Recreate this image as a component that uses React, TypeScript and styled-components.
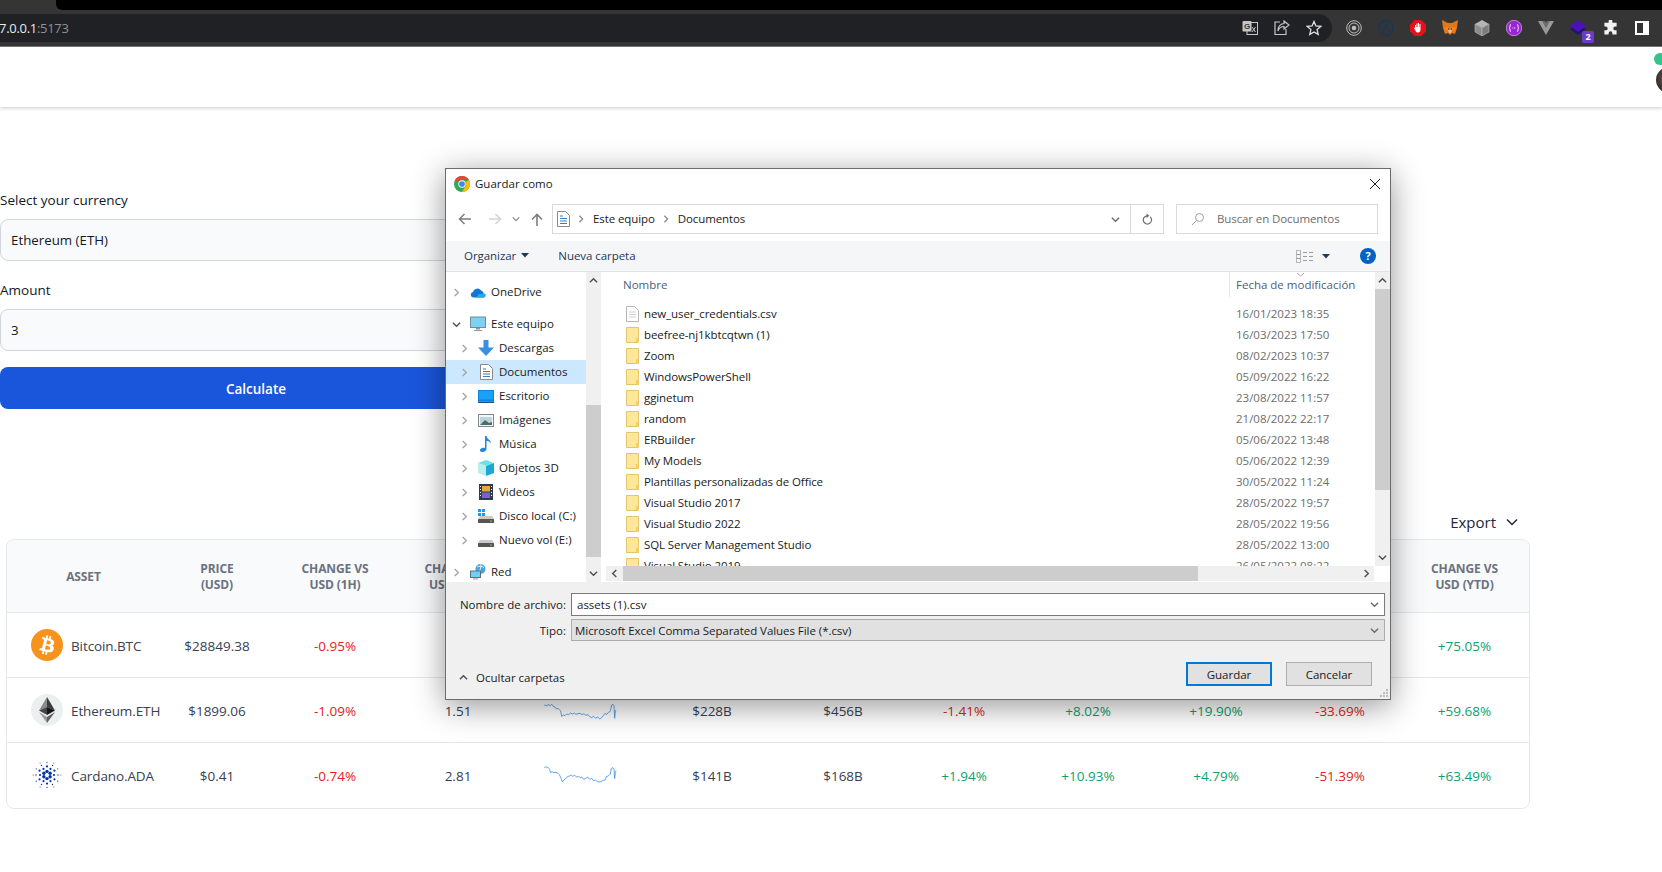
import React from "react";
import styled, { createGlobalStyle } from "styled-components";

const Global = createGlobalStyle`
  html, body { margin: 0; padding: 0; background: #fff; overflow: hidden; }
  * { box-sizing: border-box; }
  svg { flex: none; }
  #root { width: 1662px; height: 872px; overflow: hidden; }
`;

const PAGE_FONT = `"Open Sans", "Liberation Sans", sans-serif`;
const COLS = "153px 114px 122px 124px 122px 140px 122px 120px 128px 128px 120px 129px";

const Page = styled.div`
  position: relative;
  width: 1662px;
  height: 872px;
  overflow: hidden;
  font-family: ${PAGE_FONT};
  background: #fff;
`;

/* ---------- browser chrome ---------- */
const TabStrip = styled.div`
  height: 10px;
  background: #353535;
`;
const TabGap = styled.div`
  height: 10px;
  margin-left: 56px;
  background: #000;
  border-bottom-left-radius: 6px;
`;
const BrowserBar = styled.div`
  height: 37px;
  background: #353535;
  border-bottom: 1px solid #7c7c7c;
  display: flex;
  align-items: center;
  padding-bottom: 1px;
`;
const Omnibox = styled.div`
  width: 1332px;
  height: 28px;
  background: #202124;
  border-radius: 0 14px 14px 0;
  display: flex;
  align-items: center;
  flex: none;
`;
const UrlHost = styled.span`
  color: #e8eaed;
  font-size: 13px;
  letter-spacing: -0.3px;
  margin-left: -1px;
`;
const UrlPort = styled.span`
  color: #8f9296;
  font-size: 13px;
  letter-spacing: -0.3px;
`;
const OmniIcons = styled.div`
  margin-left: auto;
  display: flex;
  gap: 16px;
  padding-right: 10px;
`;
const ExtIcons = styled.div`
  display: flex;
  align-items: center;
  margin-left: 6px;
`;
const ExtSlot = styled.div`
  position: relative;
  width: 32px;
  display: flex;
  justify-content: center;
  align-items: center;
`;
const ExtBadge = styled.span`
  position: absolute;
  right: 0px;
  bottom: -7px;
  width: 12px;
  height: 12px;
  background: #6a3cc8;
  border-radius: 2px;
  color: #fff;
  font-size: 9px;
  line-height: 12px;
  text-align: center;
  font-weight: 700;
`;

/* ---------- app header ---------- */
const AppHeader = styled.header`
  height: 60px;
  background: #fff;
  box-shadow: 0 1px 4px rgba(0, 0, 0, 0.22);
  display: flex;
  justify-content: flex-end;
  position: relative;
`;
const AvatarWrap = styled.div`
  position: relative;
  width: 32px;
  height: 28px;
  margin: 19px -26px 0 0;
  border-radius: 50%;
  background: radial-gradient(circle at 40% 45%, #6b6570 0, #4a3f3c 35%, #241f1f 70%);
`;
const OnlineDot = styled.span`
  position: absolute;
  left: -2px;
  top: -13px;
  width: 12px;
  height: 12px;
  border-radius: 50%;
  background: #31c48d;
`;

/* ---------- form ---------- */
const Form = styled.div`
  width: 512px;
  padding-top: 83px;
  display: flex;
  flex-direction: column;
`;
const FieldLabel = styled.label`
  display: block;
  height: 20px;
  line-height: 20px;
  font-size: 13.5px;
  font-weight: 500;
  color: #111827;
  margin-bottom: 9px;
`;
const FieldBox = styled.div`
  height: 42px;
  background: #f9fafb;
  border: 1px solid #d1d5db;
  border-radius: 8px;
  padding: 0 10px;
  display: flex;
  align-items: center;
  font-size: 13.3px;
  color: #111827;
  margin-bottom: 19px;
`;
const CalcButton = styled.button`
  height: 42px;
  margin-top: -3px;
  padding: 2px 0 0;
  background: #1a56db;
  border: 0;
  border-radius: 8px;
  color: #fff;
  font-family: inherit;
  font-size: 13.5px;
  font-weight: 600;
`;

/* ---------- table ---------- */
const TableSection = styled.section`
  width: 1524px;
  margin-left: 6px;
`;
const ExportRow = styled.div`
  margin-top: 101px;
  height: 24px;
  margin-bottom: 5px;
  display: flex;
  justify-content: flex-end;
  align-items: center;
  gap: 9px;
  padding-right: 11px;
  font-size: 15px;
  color: #1f2937;
`;
const TableCard = styled.div`
  border: 1px solid #e5e7eb;
  border-radius: 8px;
  overflow: hidden;
  background: #fff;
`;
const HeadRow = styled.div`
  height: 73px;
  display: grid;
  grid-template-columns: ${COLS};
  background: #f9fafb;
  border-bottom: 1px solid #e5e7eb;
`;
const HeadCell = styled.div`
  display: flex;
  align-items: center;
  justify-content: center;
  text-align: center;
  padding-top: 2px;
  font-size: 12px;
  line-height: 16px;
  font-weight: 700;
  letter-spacing: -0.1px;
  color: #6b7280;
  text-transform: uppercase;
  white-space: pre-line;
`;
const BodyRow = styled.div<{ $last?: boolean }>`
  height: 65px;
  display: grid;
  grid-template-columns: ${COLS};
  align-items: center;
  border-bottom: ${(p) => (p.$last ? "0" : "1px solid #e5e7eb")};
  padding-bottom: ${(p) => (p.$last ? "1px" : "0")};
`;
const AssetCell = styled.div`
  display: flex;
  align-items: center;
  gap: 8px;
  padding-left: 24px;
  font-size: 13.5px;
  letter-spacing: -0.1px;
  color: #374151;
  white-space: nowrap;
`;
const AssetName = styled.span`
  padding-top: 2px;
`;
const Cell = styled.div<{ $tone?: "up" | "down" }>`
  text-align: center;
  padding-top: 2px;
  font-size: 13.5px;
  color: ${(p) => (p.$tone === "up" ? "#0e9f6e" : p.$tone === "down" ? "#e02424" : "#374151")};
`;
const ChartCell = styled.div`
  display: flex;
  justify-content: center;
  padding-top: 2px;
`;

/* ---------- dialog ---------- */
const Dialog = styled.div`
  position: absolute;
  left: 445px;
  top: 168px;
  width: 946px;
  height: 532px;
  background: #fff;
  border: 1px solid #6c6c6c;
  box-shadow: 0 6px 30px rgba(0, 0, 0, 0.42);
  display: flex;
  flex-direction: column;
  font-family: ${PAGE_FONT};
  font-size: 11.5px;
  color: #1a1a1a;
`;
const TitleBar = styled.div`
  height: 35px;
  flex: none;
  display: flex;
  align-items: center;
  gap: 5px;
  padding: 0 9px 6px 8px;
`;
const TitleText = styled.span`
  font-size: 11.5px;
`;
const CloseBox = styled.span`
  margin-left: auto;
  display: flex;
`;
const AddressRow = styled.div`
  height: 37px;
  flex: none;
  display: flex;
  align-items: flex-start;
`;
const NavButtons = styled.div`
  width: 106px;
  height: 30px;
  display: flex;
  align-items: center;
  padding-left: 11px;
`;
const NavBtn = styled.span<{ $w: number }>`
  width: ${(p) => p.$w}px;
  display: flex;
  justify-content: center;
  flex: none;
`;
const AddressBox = styled.div`
  width: 612px;
  height: 30px;
  border: 1px solid #d9d9d9;
  display: flex;
  align-items: center;
  padding-left: 4px;
  letter-spacing: -0.1px;
`;
const AddressText = styled.span`
  padding-bottom: 2px;
`;
const Crumb = styled.span`
  display: flex;
  margin: 0 8px 0 7px;
`;
const AddressEnd = styled.div`
  margin-left: auto;
  display: flex;
  align-items: center;
  height: 28px;
`;
const AddressDrop = styled.span`
  width: 30px;
  display: flex;
  justify-content: center;
`;
const AddressRefresh = styled.span`
  width: 33px;
  height: 28px;
  border-left: 1px solid #d9d9d9;
  display: flex;
  align-items: center;
  justify-content: center;
`;
const SearchBox = styled.div`
  width: 202px;
  height: 30px;
  margin-left: 12px;
  border: 1px solid #d9d9d9;
  display: flex;
  align-items: center;
  padding-left: 14px;
  gap: 12px;
  color: #6d6d6d;
  letter-spacing: -0.1px;
`;
const ToolBar = styled.div`
  height: 31px;
  flex: none;
  background: #f5f6f7;
  border-bottom: 1px solid #e4e4e4;
  display: flex;
  align-items: center;
  padding: 0 14px 0 18px;
  color: #1e395b;
`;
const ToolItem = styled.span`
  display: flex;
  align-items: center;
  gap: 5px;
  margin-right: 29px;
  padding-bottom: 2px;
  letter-spacing: -0.05px;
`;
const ToolRight = styled.div`
  margin-left: auto;
  display: flex;
  align-items: center;
  gap: 9px;
`;
const HelpDot = styled.span`
  width: 16px;
  height: 16px;
  margin-left: 21px;
  border-radius: 50%;
  background: #0463c0;
  color: #fff;
  font-size: 11px;
  font-weight: 700;
  line-height: 16px;
  text-align: center;
`;
const BodyArea = styled.div`
  height: 310px;
  flex: none;
  display: grid;
  grid-template-columns: 140px 15px 5px 1fr;
  overflow: hidden;
`;
const NavPane = styled.div`
  padding-top: 8px;
  overflow: hidden;
`;
const NavRow = styled.div<{ $level: number; $sel?: boolean; $gap?: boolean }>`
  height: 24px;
  margin-top: ${(p) => (p.$gap ? "8px" : "0")};
  display: flex;
  align-items: center;
  background: ${(p) => (p.$sel ? "#cce8ff" : "transparent")};
  padding-left: ${(p) => (p.$level === 0 ? 6 : 14)}px;
  white-space: nowrap;
`;
const NavChevron = styled.span`
  width: 9px;
  display: flex;
  justify-content: center;
  margin-right: 9px;
  flex: none;
`;
const NavIcon = styled.span`
  width: 16px;
  height: 16px;
  display: flex;
  align-items: center;
  justify-content: center;
  margin-right: 5px;
  flex: none;
`;
const NavLabel = styled.span`
  padding-bottom: 2px;
`;
const VScroll = styled.div`
  background: #f0f0f0;
  display: flex;
  flex-direction: column;
  align-items: stretch;
`;
const ScrollArrow = styled.div`
  height: 17px;
  display: flex;
  align-items: center;
  justify-content: center;
  flex: none;
`;
const ScrollGap = styled.div<{ $h: number }>`
  height: ${(p) => p.$h}px;
  flex: none;
`;
const ScrollThumb = styled.div<{ $h: number }>`
  height: ${(p) => p.$h}px;
  flex: none;
  background: #cdcdcd;
`;
const FilePane = styled.div`
  display: flex;
  flex-direction: column;
  min-width: 0;
`;
const FileTop = styled.div`
  height: 294px;
  flex: none;
  display: grid;
  grid-template-columns: 1fr 15px;
  overflow: hidden;
`;
const FileList = styled.div`
  overflow: hidden;
`;
const ListHead = styled.div`
  height: 25px;
  display: grid;
  grid-template-columns: 623px 1fr;
  color: #4c607a;
  margin-bottom: 6px;
`;
const HeadName = styled.span`
  padding: 5px 0 0 17px;
`;
const HeadDate = styled.span`
  position: relative;
  padding: 5px 0 0 6px;
  border-left: 1px solid #e5e5e5;
  white-space: nowrap;
`;
const SortCaret = styled.span`
  position: absolute;
  left: 66px;
  top: 0;
  display: flex;
`;
const FileRow = styled.div`
  height: 21px;
  display: grid;
  grid-template-columns: 623px 1fr;
  align-items: center;
`;
const FileName = styled.span`
  display: flex;
  align-items: center;
  padding-left: 20px;
  gap: 5px;
  letter-spacing: -0.1px;
  white-space: nowrap;
`;
const FileDate = styled.span`
  padding-left: 7px;
  color: #6d6d6d;
  white-space: nowrap;
`;
const HScroll = styled.div`
  height: 15px;
  flex: none;
  display: grid;
  grid-template-columns: 17px 575px 1fr 16px 16px;
  background: #f0f0f0;
`;
const HThumb = styled.div`
  background: #cdcdcd;
`;
const HArrow = styled.div`
  display: flex;
  align-items: center;
  justify-content: center;
`;
const HCorner = styled.div`
  background: #fff;
`;
const BottomPanel = styled.div`
  position: relative;
  flex: 1;
  background: #f0f0f0;
  padding-top: 11px;
`;
const FormGrid = styled.div`
  display: grid;
  grid-template-columns: 120px 814px;
  column-gap: 5px;
  row-gap: 3px;
  align-items: center;
`;
const FormLabel = styled.span`
  text-align: right;
  white-space: nowrap;
`;
const NameInput = styled.div`
  height: 23px;
  background: #fff;
  border: 1px solid #7a7a7a;
  display: flex;
  align-items: center;
  justify-content: space-between;
  padding: 0 5px;
`;
const TypeInput = styled.div`
  height: 22px;
  background: #e1e1e1;
  border: 1px solid #adadad;
  display: flex;
  align-items: center;
  justify-content: space-between;
  padding: 0 5px 0 3px;
  letter-spacing: -0.05px;
`;
const Footer = styled.div`
  margin-top: 21px;
  display: flex;
  justify-content: space-between;
  align-items: flex-start;
  padding: 0 18px 0 13px;
`;
const HideFolders = styled.span`
  display: flex;
  align-items: center;
  gap: 8px;
  padding-top: 8px;
`;
const Actions = styled.div`
  display: flex;
  gap: 14px;
`;
const DialogButton = styled.button<{ $primary?: boolean }>`
  width: 86px;
  height: 24px;
  padding: 0;
  background: #e1e1e1;
  border: ${(p) => (p.$primary ? "2px solid #0078d7" : "1px solid #adadad")};
  font-family: inherit;
  font-size: 11.5px;
  color: #1a1a1a;
`;
const Grip = styled.span`
  position: absolute;
  right: 1px;
  bottom: 1px;
  display: flex;
`;

/* ---------- icons ---------- */
const Chev = ({ d = "right", c = "#a6a6a6", s = 9 }: { d?: "right" | "down" | "up" | "left"; c?: string; s?: number }) => {
  const pts = { right: "3,1 7,5 3,9", left: "7,1 3,5 7,9", down: "1,3 5,7 9,3", up: "1,7 5,3 9,7" }[d];
  return (
    <svg width={s} height={s} viewBox="0 0 10 10">
      <polyline points={pts} fill="none" stroke={c} strokeWidth="1.6" />
    </svg>
  );
};
const Caret = ({ c = "#1e395b" }: { c?: string }) => (
  <svg width="8" height="5" viewBox="0 0 8 5"><polygon points="0,0 8,0 4,4.5" fill={c} /></svg>
);
const ChromeIcon = () => (
  <svg width="16" height="16" viewBox="0 0 48 48">
    <circle cx="24" cy="24" r="24" fill="#34a853" />
    <path d="M24 0a24 24 0 0 1 20.8 12H24a12 12 0 0 0-10.4 6L3.2 12A24 24 0 0 1 24 0z" fill="#ea4335" />
    <path d="M44.8 12A24 24 0 0 1 24 48l10.4-18a12 12 0 0 0 0-12z" fill="#fbbc05" />
    <circle cx="24" cy="24" r="11" fill="#fff" />
    <circle cx="24" cy="24" r="8.5" fill="#4285f4" />
  </svg>
);
const Folder = () => (
  <svg width="13" height="16" viewBox="0 0 13 16">
    <path d="M.5 .5h12v15H.5z" fill="#ffe79a" stroke="#e3c56f" />
    <path d="M10 11h2.500v4.500H10z" fill="#f7cf5f" />
  </svg>
);
const FileDoc = () => (
  <svg width="13" height="16" viewBox="0 0 13 16">
    <path d="M.5 .5h8l4 4v11H.5z" fill="#fff" stroke="#b5b5b5" />
    <path d="M3 6h7M3 8.500h7M3 11h7" stroke="#cfcfcf" />
  </svg>
);
const DocsIcon = () => (
  <svg width="13" height="16" viewBox="0 0 13 16">
    <path d="M.5 .5h8l4 4v11H.5z" fill="#fff" stroke="#8a8a8a" />
    <path d="M3 5h3M3 7.500h7M3 10h7M3 12.500h7" stroke="#3a7fb8" />
  </svg>
);
const OneDrive = () => (
  <svg width="16" height="11" viewBox="0 0 16 11">
    <path d="M3 10.500A2.800 2.800 0 0 1 3 5a4.500 4.500 0 0 1 8-1.500 3.500 3.500 0 0 1 2.600 3A2 2 0 0 1 13.500 10.500z" fill="#0f78d4" />
    <path d="M6 10.500 9 7l4.500-.5a2 2 0 0 1 0 4z" fill="#28a8ea" />
  </svg>
);
const Monitor = () => (
  <svg width="16" height="16" viewBox="0 0 16 16">
    <rect x=".5" y="1" width="15" height="10.500" fill="#7fd0f5" stroke="#6f8da0" />
    <path d="M6 12h4v1.500H6zM4 14h8v1H4z" fill="#8b9aa5" />
  </svg>
);
const Download = () => (
  <svg width="16" height="16" viewBox="0 0 16 16">
    <path d="M5.500 0h5v7.500H16L8 16 0 7.500h5.500z" fill="#3a8fe0" />
  </svg>
);
const Desktop = () => (
  <svg width="16" height="13" viewBox="0 0 16 13">
    <rect width="16" height="11.500" fill="#0a84e8" />
    <rect x="1" y="1" width="14" height="8.500" fill="#1aa0f5" />
    <rect y="11.500" width="16" height="1.500" fill="#1a4f88" />
  </svg>
);
const Pictures = () => (
  <svg width="16" height="13" viewBox="0 0 16 13">
    <rect x=".5" y=".5" width="15" height="12" fill="#f4f6f7" stroke="#7d8a92" />
    <path d="M2 3h12v8H2z" fill="#bcd4dc" />
    <path d="M2 11 7 6l4 3 3-1v3z" fill="#4e6f63" />
  </svg>
);
const Music = () => (
  <svg width="14" height="16" viewBox="0 0 14 16">
    <path d="M6 0h1.500c.3 3 4.500 3.500 4.500 7.500-1-2-3-2.500-4.500-2.500v8c0 2-2 3-4 3S0 14.500 1.500 13 5 11.500 6 12z" fill="#1e88e5" />
  </svg>
);
const Cube = () => (
  <svg width="16" height="16" viewBox="0 0 16 16">
    <path d="M8 0l8 3-8 3-8-3z" fill="#6fe0e8" />
    <path d="M0 3l8 3v10l-8-3z" fill="#b8f0ee" />
    <path d="M16 3 8 6v10l8-3z" fill="#1ba8d6" />
  </svg>
);
const Film = () => (
  <svg width="14" height="16" viewBox="0 0 14 16">
    <rect width="14" height="16" fill="#2f3b45" />
    <rect x="3" y="2" width="8" height="5.500" fill="#e8a93a" />
    <rect x="3" y="8.500" width="8" height="5.500" fill="#7b62c8" />
    <path d="M1 2h1v1H1zM1 5h1v1H1zM1 8h1v1H1zM1 11h1v1H1zM12 2h1v1h-1zM12 5h1v1h-1zM12 8h1v1h-1zM12 11h1v1h-1z" fill="#fff" />
  </svg>
);
const Disk = ({ win }: { win?: boolean }) => (
  <svg width="16" height="14" viewBox="0 0 16 14">
    {win && <path d="M0 0h3v3H0zM4 0h3v3H4zM0 4h3v3H0zM4 4h3v3H4z" fill="#1e9be8" />}
    <path d="M2 7h12l2 3H0z" fill="#c9c9c9" />
    <rect y="10" width="16" height="4" rx=".5" fill="#555" />
    <rect x="12" y="11.500" width="2" height="1" fill="#6fdc5c" />
  </svg>
);
const Network = () => (
  <svg width="16" height="16" viewBox="0 0 16 16">
    <circle cx="10.500" cy="5" r="5" fill="#4aa3df" />
    <path d="M7 3c2-1 5-1 7 .5M9 9c1-3 2-5 2-9" stroke="#e5f3fb" fill="none" />
    <rect x=".5" y="7" width="10" height="6.500" fill="#6fd0f5" stroke="#61707a" />
    <path d="M3 14.500h5v1H3z" fill="#8b9aa5" />
  </svg>
);
const GlyphTranslate = () => (
  <svg width="16" height="16" viewBox="0 0 16 16">
    <rect x="5" y="2.500" width="10.500" height="12" fill="none" stroke="#c4c7c5" />
    <rect x=".5" y="1" width="9" height="10.500" rx="1" fill="#c4c7c5" />
    <text x="2" y="9" fontSize="8" fontFamily="Liberation Sans" fontWeight="700" fill="#353535">G</text>
    <path d="M10 7l3.500 5M13.500 7 10 12" stroke="#c4c7c5" />
  </svg>
);
const GlyphShare = () => (
  <svg width="16" height="16" viewBox="0 0 16 16" fill="none" stroke="#c4c7c5" strokeWidth="1.200">
    <path d="M6 2H1v12.500h11V9" />
    <path d="M10 1l5 4-5 4V6.500C7 6.500 5 8 4 11c0-4 2-7 6-7.500z" />
  </svg>
);
const GlyphStar = () => (
  <svg width="16" height="16" viewBox="0 0 16 16">
    <polygon points="8,1.500 9.900,6 14.800,6.400 11.100,9.600 12.200,14.400 8,11.900 3.800,14.400 4.900,9.600 1.200,6.400 6.100,6" fill="none" stroke="#dfe1e5" strokeWidth="1.300" />
  </svg>
);
const ExtTarget = () => (
  <svg width="16" height="16" viewBox="0 0 16 16" fill="none" stroke="#bdbdbd">
    <circle cx="8" cy="8" r="7.300" /><circle cx="8" cy="8" r="5" />
    <circle cx="8" cy="8" r="2.300" fill="#bdbdbd" stroke="none" />
  </svg>
);
const ExtA = () => (
  <svg width="16" height="16" viewBox="0 0 16 16" fill="none" stroke="#16365c" strokeWidth="1.200">
    <circle cx="8" cy="8" r="7.300" /><path d="M5 11.500 8 4l3 7.500M6 9.500h4" />
  </svg>
);
const ExtStop = () => (
  <svg width="16" height="16" viewBox="0 0 16 16">
    <polygon points="4.700,0 11.300,0 16,4.700 16,11.300 11.300,16 4.700,16 0,11.300 0,4.700" fill="#e8101a" />
    <path d="M5 8V5h1v2h.500V3.500h1V7H8V3h1v4h.500V4h1v5.500c0 2-1 3-2.500 3s-2-.500-3.500-3.500L3.500 7.500z" fill="#fff" />
  </svg>
);
const ExtFox = () => (
  <svg width="16" height="16" viewBox="0 0 16 16">
    <polygon points="0,0 6,3 10,3 16,0 15,8 13,14 10,13 8,15 6,13 3,14 1,8" fill="#e2761b" />
    <polygon points="2,8 6,7 6,10 3,10" fill="#f6851b" />
    <polygon points="14,8 10,7 10,10 13,10" fill="#f6851b" />
    <polygon points="6,10 10,10 9,13 7,13" fill="#d7c1b3" />
    <polygon points="6,8 7,9 6,10" fill="#233447" />
    <polygon points="10,8 9,9 10,10" fill="#233447" />
  </svg>
);
const ExtBox = () => (
  <svg width="16" height="16" viewBox="0 0 16 16">
    <polygon points="8,0 15,4 8,8 1,4" fill="#b5b5b5" />
    <polygon points="1,4 8,8 8,16 1,12" fill="#8c8c8c" stroke="#bdbdbd" strokeWidth=".6" />
    <polygon points="15,4 8,8 8,16 15,12" fill="#7d7d7d" stroke="#bdbdbd" strokeWidth=".6" />
  </svg>
);
const ExtPurple = () => (
  <svg width="16" height="16" viewBox="0 0 16 16">
    <circle cx="8" cy="8" r="7.700" fill="#9b24d6" stroke="#e6c8f5" strokeWidth=".6" />
    <path d="M5 4.500c-1 0-1 1-1 2s-.8 1.500-.8 1.500.8.500.8 1.500 0 2 1 2M11 4.500c1 0 1 1 1 2s.8 1.500.8 1.500-.8.500-.8 1.500 0 2-1 2M6.500 8h.8M8 8h.8M9.500 8h.300" stroke="#fff" fill="none" />
  </svg>
);
const ExtV = () => (
  <svg width="16" height="14" viewBox="0 0 16 14">
    <polygon points="0,0 4.500,0 8,6.500 11.500,0 16,0 8,14" fill="#9a9a9a" />
    <polygon points="4.500,0 7,0 8,2 9,0 11.500,0 8,6.500" fill="#6f6f6f" />
  </svg>
);
const ExtStack = () => (
  <svg width="16" height="16" viewBox="0 0 16 16">
    <polygon points="0,9 8,5 16,9 8,15" fill="#241270" />
    <polygon points="0,6 8,0 16,6 8,12" fill="#4a12b8" />
  </svg>
);
const ExtPuzzle = () => (
  <svg width="15" height="15" viewBox="0 0 16 16">
    <path d="M6 1.500a2 2 0 0 1 4 0V3h4.500v4H13a2 2 0 0 0 0 4h1.500v4.500H10V14a2 2 0 0 0-4 0v1.500H1.500V11H3a2 2 0 0 0 0-4H1.500V3H6z" fill="#f1f1f1" />
  </svg>
);
const ExtPanel = () => (
  <svg width="14" height="14" viewBox="0 0 14 14">
    <rect x="1" y="1" width="12" height="12" fill="none" stroke="#fff" strokeWidth="2" />
    <rect x="8" y="1" width="5" height="12" fill="#fff" />
  </svg>
);
const BtcIcon = () => (
  <svg width="32" height="32" viewBox="0 0 32 32">
    <circle cx="16" cy="16" r="16" fill="#f7931a" />
    <path fill="#fff" d="M23.189 14.020c.314-2.096-1.283-3.223-3.465-3.975l.708-2.840-1.728-.430-.690 2.765c-.454-.114-.920-.220-1.385-.326l.695-2.783L15.596 6l-.708 2.839c-.376-.086-.746-.170-1.104-.260l.002-.009-2.384-.595-.460 1.846s1.283.294 1.256.312c.700.175.826.638.805 1.006l-.806 3.235c.048.012.110.030.180.057l-.183-.045-1.130 4.532c-.086.212-.303.531-.793.410.018.025-1.256-.313-1.256-.313l-.858 1.978 2.250.561c.418.105.828.215 1.231.318l-.715 2.872 1.727.430.708-2.840c.472.127.930.245 1.378.357l-.706 2.828 1.728.430.715-2.866c2.948.558 5.164.333 6.097-2.333.752-2.146-.037-3.385-1.588-4.192 1.130-.260 1.980-1.003 2.207-2.538zm-3.950 5.538c-.533 2.147-4.148.986-5.320.695l.950-3.805c1.172.293 4.929.872 4.370 3.110zm.535-5.569c-.487 1.953-3.495.960-4.470.717l.860-3.450c.975.243 4.118.696 3.610 2.733z" />
  </svg>
);
const EthIcon = () => (
  <svg width="32" height="32" viewBox="0 0 32 32">
    <circle cx="16" cy="16" r="16" fill="#ecefF0" />
    <polygon points="16,3 8,16.500 16,13" fill="#8a8a8a" />
    <polygon points="16,3 24,16.500 16,13" fill="#3c3c3d" />
    <polygon points="8,16.500 16,21 16,13" fill="#454545" />
    <polygon points="24,16.500 16,21 16,13" fill="#141414" />
    <polygon points="8,18 16,29 16,23" fill="#9a9a9a" />
    <polygon points="24,18 16,29 16,23" fill="#5f5f60" />
  </svg>
);
const AdaIcon = () => {
  const dots: { x: number; y: number; r: number }[] = [];
  const ring = (radius: number, n: number, r: number, offset = 0) => {
    for (let i = 0; i < n; i++) {
      const a = ((i * 360) / n + offset) * (Math.PI / 180);
      dots.push({ x: 16 + radius * Math.cos(a), y: 16 + radius * Math.sin(a), r });
    }
  };
  ring(3.6, 6, 1.7, 30);
  ring(7, 6, 1.1, 0);
  ring(8.6, 6, 1.1, 30);
  ring(11, 6, 0.7, 0);
  ring(12.4, 6, 0.6, 30);
  ring(13.8, 6, 0.5, 0);
  return (
    <svg width="32" height="32" viewBox="0 0 32 32">
      {dots.map((d, i) => (
        <circle key={i} cx={d.x} cy={d.y} r={d.r} fill="#0033ad" />
      ))}
    </svg>
  );
};
const Spark = ({ pts }: { pts: string }) => (
  <svg width="74" height="20" viewBox="313 0 220 60">
    <polyline points={pts} fill="none" stroke="#3f8fe0" strokeWidth="2.400" strokeLinejoin="round" />
  </svg>
);

const SPARK_A =
  "313,12 320,14 325,11 331,14 335,10 340,16 345,18 350,24 354,22 358,26 362,30 365,46 370,42 375,44 380,39 386,41 392,36 397,39 403,36 408,40 414,38 420,37 426,41 432,38 438,43 444,41 449,47 455,50 461,46 467,52 473,48 479,54 485,50 490,44 495,37 500,40 505,34 510,32 513,22 515,12 519,10 522,14 524,52 526,30 528,27";
const SPARK_B =
  "313,4 320,3 325,5 329,10 331,20 336,17 342,20 348,19 354,22 358,26 362,34 367,48 372,42 377,38 382,32 388,30 393,27 398,31 404,28 410,33 416,31 421,35 426,33 431,40 437,37 443,33 449,40 455,37 460,44 466,42 472,47 480,48 487,44 495,42 499,32 505,30 511,24 514,7 519,5 522,9 524,38 526,20 528,14";

type Tone = "up" | "down";
const tone = (v: string): Tone => (v.startsWith("+") ? "up" : "down");

const HEADERS = [
  "Asset", "Price\n(USD)", "Change vs\nUSD (1H)", "Change vs\nUSD (24H)", "7D Chart",
  "Market\nCap", "Volume\n(24H)", "Change vs\nUSD (7D)", "Change vs\nUSD (30D)",
  "Change vs\nUSD (90D)", "Change vs\nUSD (1Y)", "Change vs\nUSD (YTD)",
];
const ROWS = [
  { icon: <BtcIcon />, name: "Bitcoin.BTC", price: "$28849.38", h1: "-0.95%", mid: "1.20", spark: SPARK_A, cap: "$557B", vol: "$590B", changes: ["-1.10%", "+6.12%", "+21.40%", "-28.70%", "+75.05%"] },
  { icon: <EthIcon />, name: "Ethereum.ETH", price: "$1899.06", h1: "-1.09%", mid: "1.51", spark: SPARK_A, cap: "$228B", vol: "$456B", changes: ["-1.41%", "+8.02%", "+19.90%", "-33.69%", "+59.68%"] },
  { icon: <AdaIcon />, name: "Cardano.ADA", price: "$0.41", h1: "-0.74%", mid: "2.81", spark: SPARK_B, cap: "$141B", vol: "$168B", changes: ["+1.94%", "+10.93%", "+4.79%", "-51.39%", "+63.49%"] },
];
const NAV = [
  { level: 0, label: "OneDrive", icon: <OneDrive /> },
  { level: 0, label: "Este equipo", icon: <Monitor />, open: true, gap: true },
  { level: 1, label: "Descargas", icon: <Download /> },
  { level: 1, label: "Documentos", icon: <DocsIcon />, sel: true },
  { level: 1, label: "Escritorio", icon: <Desktop /> },
  { level: 1, label: "Imágenes", icon: <Pictures /> },
  { level: 1, label: "Música", icon: <Music /> },
  { level: 1, label: "Objetos 3D", icon: <Cube /> },
  { level: 1, label: "Videos", icon: <Film /> },
  { level: 1, label: "Disco local (C:)", icon: <Disk win /> },
  { level: 1, label: "Nuevo vol (E:)", icon: <Disk /> },
  { level: 0, label: "Red", icon: <Network />, gap: true },
];
const FILES: [string, string][] = [
  ["new_user_credentials.csv", "16/01/2023 18:35"],
  ["beefree-nj1kbtcqtwn (1)", "16/03/2023 17:50"],
  ["Zoom", "08/02/2023 10:37"],
  ["WindowsPowerShell", "05/09/2022 16:22"],
  ["gginetum", "23/08/2022 11:57"],
  ["random", "21/08/2022 22:17"],
  ["ERBuilder", "05/06/2022 13:48"],
  ["My Models", "05/06/2022 12:39"],
  ["Plantillas personalizadas de Office", "30/05/2022 11:24"],
  ["Visual Studio 2017", "28/05/2022 19:57"],
  ["Visual Studio 2022", "28/05/2022 19:56"],
  ["SQL Server Management Studio", "28/05/2022 13:00"],
  ["Visual Studio 2019", "26/05/2022 08:22"],
];

export default function App() {
  return (
    <Page>
      <Global />
      <TabStrip><TabGap /></TabStrip>
      <BrowserBar>
        <Omnibox>
          <UrlHost>7.0.0.1</UrlHost>
          <UrlPort>:5173</UrlPort>
          <OmniIcons>
            <GlyphTranslate />
            <GlyphShare />
            <GlyphStar />
          </OmniIcons>
        </Omnibox>
        <ExtIcons>
          <ExtSlot><ExtTarget /></ExtSlot>
          <ExtSlot><ExtA /></ExtSlot>
          <ExtSlot><ExtStop /></ExtSlot>
          <ExtSlot><ExtFox /></ExtSlot>
          <ExtSlot><ExtBox /></ExtSlot>
          <ExtSlot><ExtPurple /></ExtSlot>
          <ExtSlot><ExtV /></ExtSlot>
          <ExtSlot><ExtStack /><ExtBadge>2</ExtBadge></ExtSlot>
          <ExtSlot><ExtPuzzle /></ExtSlot>
          <ExtSlot><ExtPanel /></ExtSlot>
        </ExtIcons>
      </BrowserBar>

      <AppHeader>
        <AvatarWrap><OnlineDot /></AvatarWrap>
      </AppHeader>

      <Form>
        <FieldLabel>Select your currency</FieldLabel>
        <FieldBox>Ethereum (ETH)</FieldBox>
        <FieldLabel>Amount</FieldLabel>
        <FieldBox>3</FieldBox>
        <CalcButton>Calculate</CalcButton>
      </Form>

      <TableSection>
        <ExportRow>
          Export
          <svg width="14" height="14" viewBox="0 0 14 14"><polyline points="2,4.500 7,9.500 12,4.500" fill="none" stroke="#1f2937" strokeWidth="1.500" /></svg>
        </ExportRow>
        <TableCard>
          <HeadRow>
            {HEADERS.map((h) => <HeadCell key={h}>{h}</HeadCell>)}
          </HeadRow>
          {ROWS.map((r, i) => (
            <BodyRow key={r.name} $last={i === ROWS.length - 1}>
              <AssetCell>{r.icon}<AssetName>{r.name}</AssetName></AssetCell>
              <Cell>{r.price}</Cell>
              <Cell $tone={tone(r.h1)}>{r.h1}</Cell>
              <Cell>{r.mid}</Cell>
              <ChartCell><Spark pts={r.spark} /></ChartCell>
              <Cell>{r.cap}</Cell>
              <Cell>{r.vol}</Cell>
              {r.changes.map((c, j) => <Cell key={j} $tone={tone(c)}>{c}</Cell>)}
            </BodyRow>
          ))}
        </TableCard>
      </TableSection>

      <Dialog>
        <TitleBar>
          <ChromeIcon />
          <TitleText>Guardar como</TitleText>
          <CloseBox>
            <svg width="12" height="12" viewBox="0 0 12 12"><path d="M1 1l10 10M11 1 1 11" stroke="#222" strokeWidth="1" /></svg>
          </CloseBox>
        </TitleBar>

        <AddressRow>
          <NavButtons>
            <NavBtn $w={16}>
              <svg width="14" height="12" viewBox="0 0 14 12"><path d="M13 6H2M6.500 1 1.500 6l5 5" fill="none" stroke="#7d7d7d" strokeWidth="1.500" /></svg>
            </NavBtn>
            <NavBtn $w={15} />
            <NavBtn $w={14}>
              <svg width="14" height="12" viewBox="0 0 14 12"><path d="M1 6h11M7.500 1l5 5-5 5" fill="none" stroke="#d4d4d4" strokeWidth="1.500" /></svg>
            </NavBtn>
            <NavBtn $w={28}><Chev d="down" c="#8a8a8a" s={8} /></NavBtn>
            <NavBtn $w={14}>
              <svg width="12" height="13" viewBox="0 0 12 13"><path d="M6 13V2M1 6.500 6 1.500l5 5" fill="none" stroke="#7d7d7d" strokeWidth="1.600" /></svg>
            </NavBtn>
          </NavButtons>
          <AddressBox>
            <DocsIcon />
            <Crumb><Chev c="#8a8a8a" s={8} /></Crumb>
            <AddressText>Este equipo</AddressText>
            <Crumb><Chev c="#8a8a8a" s={8} /></Crumb>
            <AddressText>Documentos</AddressText>
            <AddressEnd>
              <AddressDrop><Chev d="down" c="#6d6d6d" /></AddressDrop>
              <AddressRefresh>
                <svg width="11" height="12" viewBox="0 0 12 13"><path d="M9 4.200A4.500 4.500 0 1 1 5.500 3" fill="none" stroke="#6d6d6d" strokeWidth="1.300" /><polygon points="5,0.500 5,5.500 8,3" fill="#6d6d6d" /></svg>
              </AddressRefresh>
            </AddressEnd>
          </AddressBox>
          <SearchBox>
            <svg width="14" height="14" viewBox="0 0 14 14"><circle cx="8.500" cy="5.500" r="4" fill="none" stroke="#a0a0a0" /><path d="M5.500 8.500 1 13" stroke="#a0a0a0" /></svg>
            <AddressText>Buscar en Documentos</AddressText>
          </SearchBox>
        </AddressRow>

        <ToolBar>
          <ToolItem>Organizar <Caret /></ToolItem>
          <ToolItem>Nueva carpeta</ToolItem>
          <ToolRight>
            <svg width="17" height="13" viewBox="0 0 17 13" fill="none">
              <rect x=".5" y=".5" width="4" height="12" stroke="#b8b8b8" />
              <path d="M.5 4.500h4M.5 8.500h4M7 2.500h4M13 2.500h4M7 6.500h4M13 6.500h4M7 10.500h4M13 10.500h4" stroke="#9c9c9c" />
            </svg>
            <Caret />
            <HelpDot>?</HelpDot>
          </ToolRight>
        </ToolBar>

        <BodyArea>
          <NavPane>
            {NAV.map((n) => (
              <NavRow key={n.label} $level={n.level} $sel={n.sel} $gap={n.gap}>
                <NavChevron>
                  <Chev d={n.open ? "down" : "right"} c={n.open ? "#555" : "#a6a6a6"} />
                </NavChevron>
                <NavIcon>{n.icon}</NavIcon>
                <NavLabel>{n.label}</NavLabel>
              </NavRow>
            ))}
          </NavPane>
          <VScroll>
            <ScrollArrow><Chev d="up" c="#505050" /></ScrollArrow>
            <ScrollGap $h={116} />
            <ScrollThumb $h={152} />
            <ScrollGap $h={8} />
            <ScrollArrow><Chev d="down" c="#505050" /></ScrollArrow>
          </VScroll>
          <div />
          <FilePane>
            <FileTop>
              <FileList>
                <ListHead>
                  <HeadName>Nombre</HeadName>
                  <HeadDate>
                    <SortCaret><svg width="9" height="5" viewBox="0 0 9 5"><polyline points="1,1 4.500,4 8,1" fill="none" stroke="#a8a8a8" /></svg></SortCaret>
                    Fecha de modificación
                  </HeadDate>
                </ListHead>
                {FILES.map(([name, date], i) => (
                  <FileRow key={name}>
                    <FileName>{i === 0 ? <FileDoc /> : <Folder />}{name}</FileName>
                    <FileDate>{date}</FileDate>
                  </FileRow>
                ))}
              </FileList>
              <VScroll>
                <ScrollArrow><Chev d="up" c="#505050" /></ScrollArrow>
                <ScrollThumb $h={201} />
                <ScrollGap $h={59} />
                <ScrollArrow><Chev d="down" c="#505050" /></ScrollArrow>
              </VScroll>
            </FileTop>
            <HScroll>
              <HArrow><Chev d="left" c="#505050" /></HArrow>
              <HThumb />
              <div />
              <HArrow><Chev d="right" c="#505050" /></HArrow>
              <HCorner />
            </HScroll>
          </FilePane>
        </BodyArea>

        <BottomPanel>
          <FormGrid>
            <FormLabel>Nombre de archivo:</FormLabel>
            <NameInput>assets (1).csv <Chev d="down" c="#6d6d6d" /></NameInput>
            <FormLabel>Tipo:</FormLabel>
            <TypeInput>Microsoft Excel Comma Separated Values File (*.csv) <Chev d="down" c="#6d6d6d" /></TypeInput>
          </FormGrid>
          <Footer>
            <HideFolders><Chev d="up" c="#505050" />Ocultar carpetas</HideFolders>
            <Actions>
              <DialogButton $primary>Guardar</DialogButton>
              <DialogButton>Cancelar</DialogButton>
            </Actions>
          </Footer>
          <Grip>
            <svg width="10" height="10" viewBox="0 0 10 10" fill="#bdbdbd">
              <path d="M7 1h2v2H7zM4 4h2v2H4zM7 4h2v2H7zM1 7h2v2H1zM4 7h2v2H4zM7 7h2v2H7z" />
            </svg>
          </Grip>
        </BottomPanel>
      </Dialog>
    </Page>
  );
}
